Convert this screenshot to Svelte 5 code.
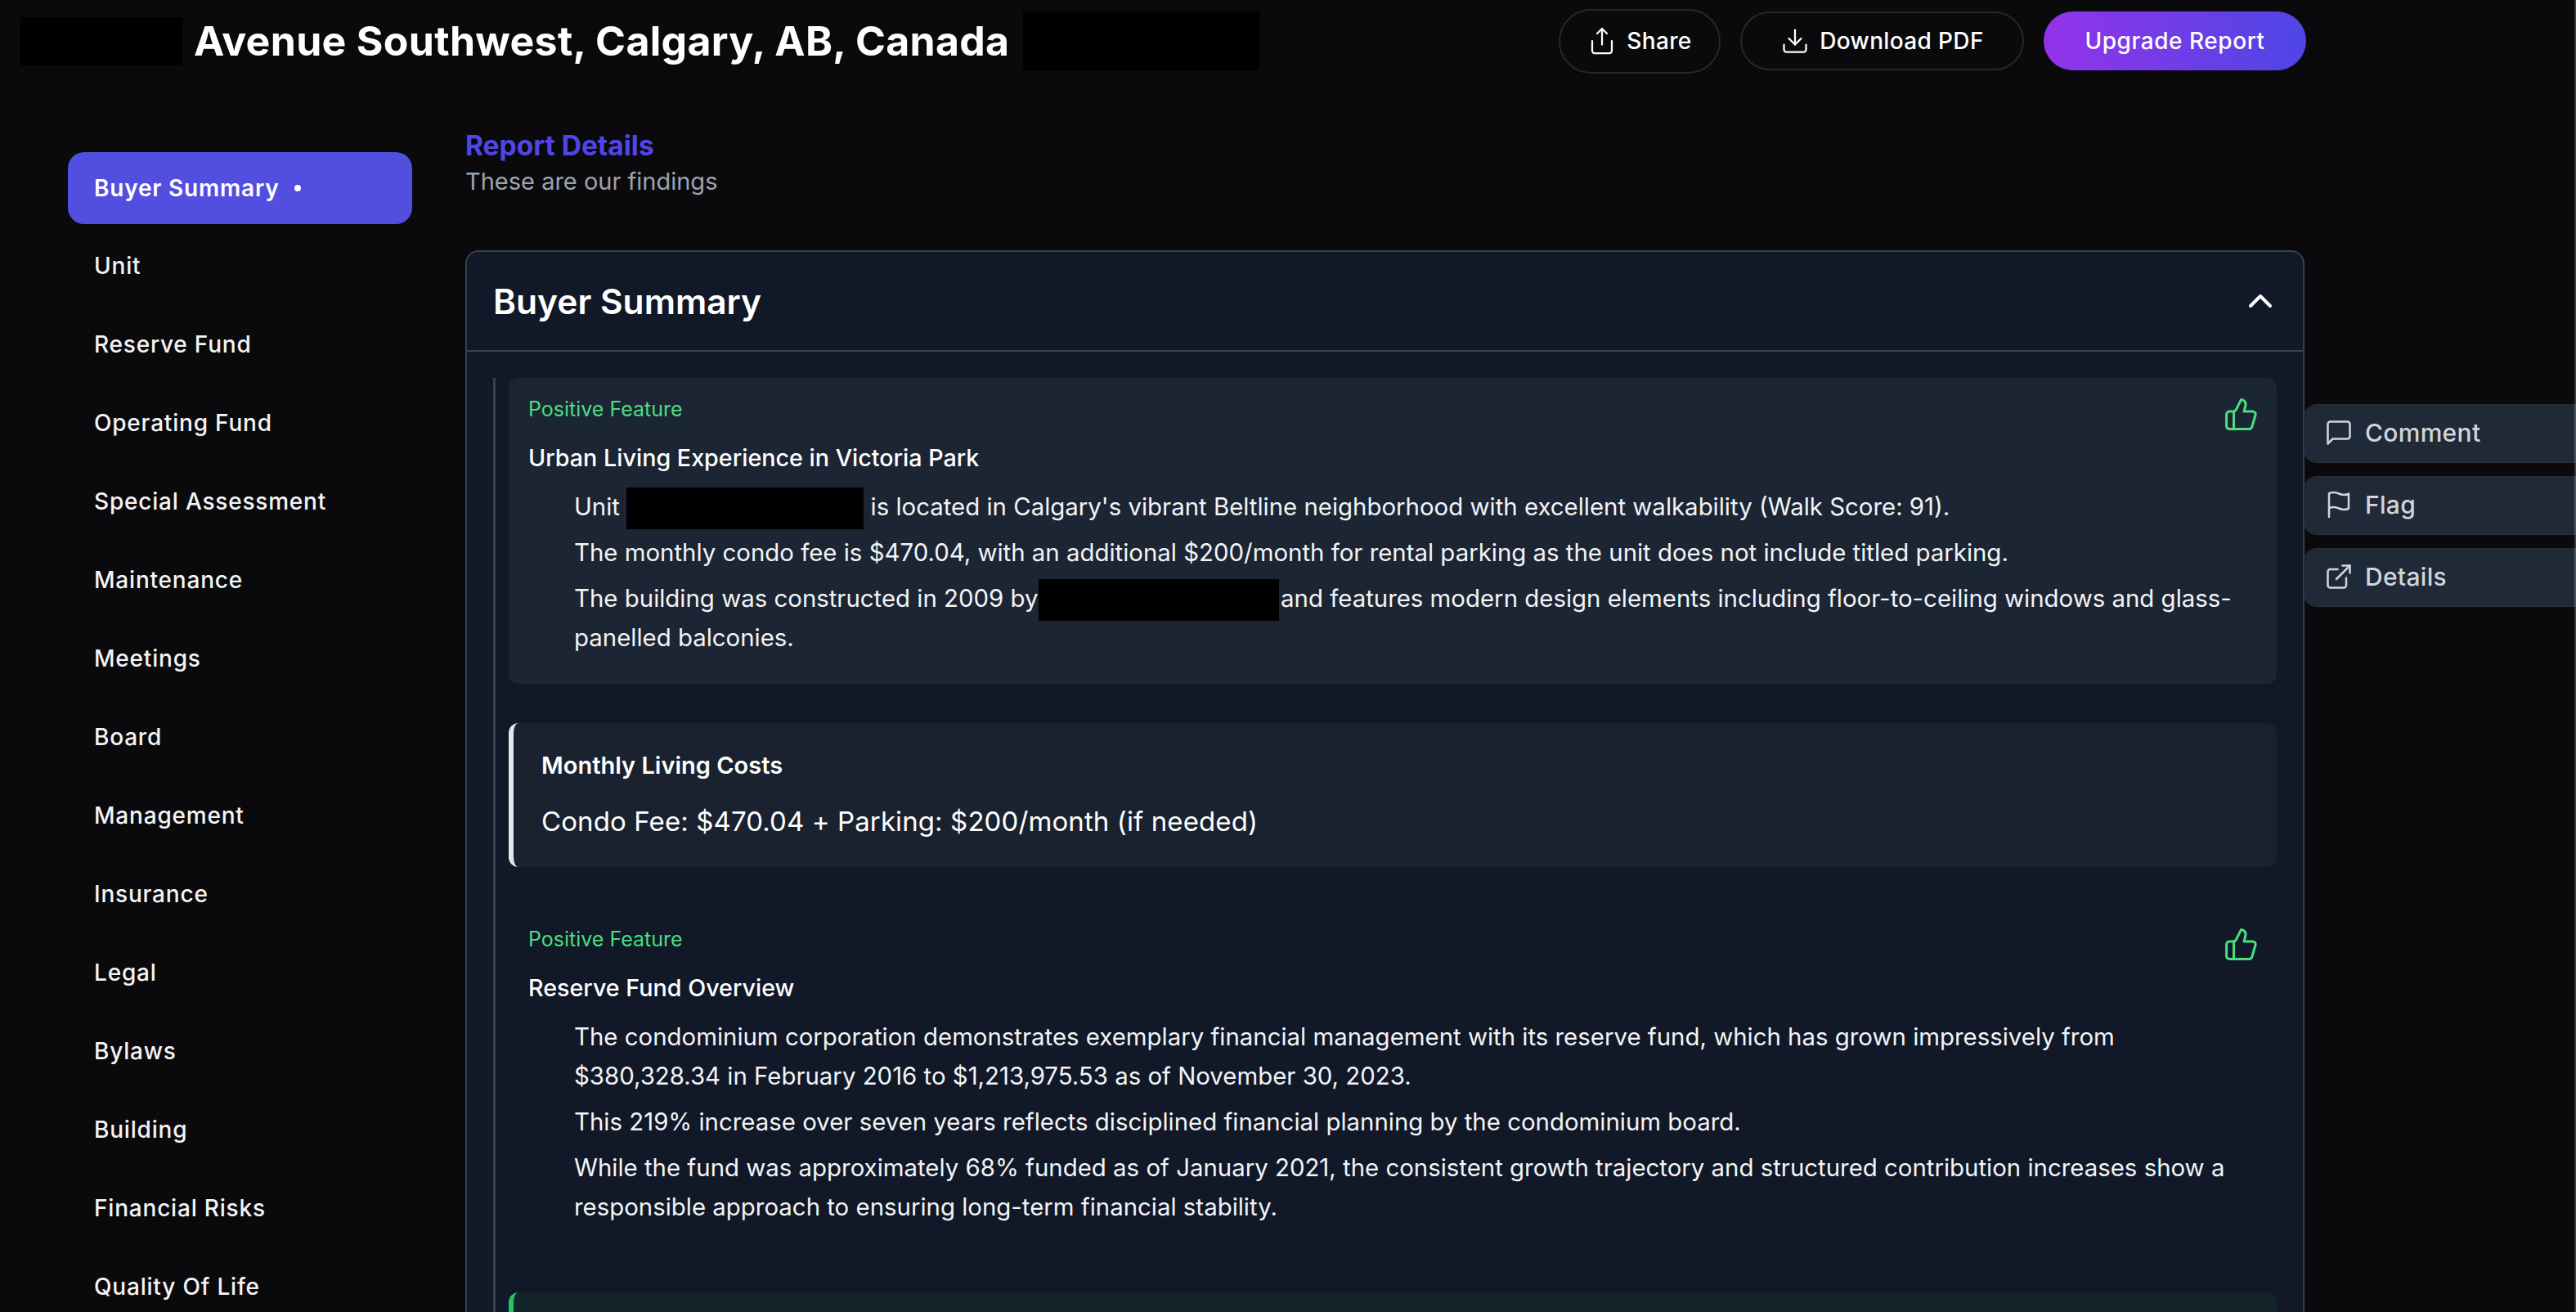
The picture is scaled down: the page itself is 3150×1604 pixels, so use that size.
<script lang="ts">
	const navItems = [
		'Unit',
		'Reserve Fund',
		'Operating Fund',
		'Special Assessment',
		'Maintenance',
		'Meetings',
		'Board',
		'Management',
		'Insurance',
		'Legal',
		'Bylaws',
		'Building',
		'Financial Risks',
		'Quality Of Life'
	];
</script>

{#snippet thumb()}
	<svg class="thumb" viewBox="0 0 24 24">
		<path d="M7 10v12" />
		<path d="M15 5.88 14 10h5.83a2 2 0 0 1 1.92 2.56l-2.33 8A2 2 0 0 1 17.5 22H4a2 2 0 0 1-2-2v-8a2 2 0 0 1 2-2h2.76a2 2 0 0 0 1.79-1.11L12 2a3.13 3.13 0 0 1 3 3.88Z" />
	</svg>
{/snippet}

<div class="page">
	<header>
		<div class="title">
			<span class="redact left"></span>
			<h1>Avenue Southwest, Calgary, AB, Canada</h1>
			<span class="redact right"></span>
		</div>
		<div class="actions">
			<button class="btn share">
				<svg class="btn-icon" viewBox="0 0 24 24">
					<path d="M4 12v8a2 2 0 0 0 2 2h12a2 2 0 0 0 2-2v-8" />
					<path d="M16 6l-4-4-4 4" />
					<path d="M12 2v13" />
				</svg>
				Share
			</button>
			<button class="btn download">
				<svg class="btn-icon" viewBox="0 0 24 24">
					<path d="M21 15v4a2 2 0 0 1-2 2H5a2 2 0 0 1-2-2v-4" />
					<path d="M7 10l5 5 5-5" />
					<path d="M12 15V3" />
				</svg>
				Download PDF
			</button>
			<button class="btn upgrade">Upgrade Report</button>
		</div>
	</header>

	<div class="layout">
		<nav>
			<a class="nav-item active" href="#buyer">Buyer Summary <span class="dot"></span></a>
			{#each navItems as item}
				<a class="nav-item" href="#section">{item}</a>
			{/each}
		</nav>

		<main>
			<h2>Report Details</h2>
			<p class="sub">These are our findings</p>

			<section class="card">
				<div class="card-head">
					<h3>Buyer Summary</h3>
					<svg class="chevron" viewBox="0 0 24 24"><path d="M6 15l6-6 6 6" /></svg>
				</div>
				<div class="card-body">
					<div class="thread">
						<article class="feature filled">
							<div class="feature-top">
								<span class="tag">Positive Feature</span>
								{@render thumb()}
							</div>
							<h4>Urban Living Experience in Victoria Park</h4>
							<ul>
								<li>Unit <span class="redact inline unit"></span> is located in Calgary's vibrant Beltline neighborhood with excellent walkability (Walk Score: 91).</li>
								<li>The monthly condo fee is $470.04, with an additional $200/month for rental parking as the unit does not include titled parking.</li>
								<li>The building was constructed in 2009 by <span class="redact inline builder"></span> and features modern design elements including floor-to-ceiling windows and glass-<br />panelled balconies.</li>
							</ul>
						</article>

						<aside class="callout">
							<h5>Monthly Living Costs</h5>
							<p>Condo Fee: $470.04 + Parking: $200/month (if needed)</p>
						</aside>

						<article class="feature">
							<div class="feature-top">
								<span class="tag">Positive Feature</span>
								{@render thumb()}
							</div>
							<h4>Reserve Fund Overview</h4>
							<ul>
								<li>The condominium corporation demonstrates exemplary financial management with its reserve fund, which has grown impressively from<br />$380,328.34 in February 2016 to $1,213,975.53 as of November 30, 2023.</li>
								<li>This 219% increase over seven years reflects disciplined financial planning by the condominium board.</li>
								<li>While the fund was approximately 68% funded as of January 2021, the consistent growth trajectory and structured contribution increases show a<br />responsible approach to ensuring long-term financial stability.</li>
							</ul>
						</article>

						<aside class="callout green"></aside>
					</div>
				</div>
			</section>
		</main>

		<div class="rail">
			<button class="rail-btn">
				<svg viewBox="0 0 24 24"><path d="M21 15a2 2 0 0 1-2 2H7l-4 4V5a2 2 0 0 1 2-2h14a2 2 0 0 1 2 2z" /></svg>
				Comment
			</button>
			<button class="rail-btn">
				<svg viewBox="0 0 24 24"><path d="M4 15s1-1 4-1 5 2 8 2 4-1 4-1V3s-1 1-4 1-5-2-8-2-4 1-4 1z" /><path d="M4 22v-7" /></svg>
				Flag
			</button>
			<button class="rail-btn">
				<svg viewBox="0 0 24 24"><path d="M18 13v6a2 2 0 0 1-2 2H5a2 2 0 0 1-2-2V8a2 2 0 0 1 2-2h6" /><path d="M15 3h6v6" /><path d="M10 14L21 3" /></svg>
				Details
			</button>
		</div>
	</div>

	<div class="scroll-edge"></div>
</div>

<style>
	:global(body) {
		margin: 0;
		background: #0a0a0c;
	}

	.page {
		position: relative;
		height: 1604px;
		overflow: hidden;
		color: #fff;
		font-family: Inter, 'Noto Sans', sans-serif;
		background: #0a0a0c;
	}

	.scroll-edge {
		position: absolute;
		top: 0;
		right: 0;
		bottom: 0;
		width: 2px;
		background: rgba(255, 255, 255, 0.2);
	}

	svg {
		fill: none;
		stroke: currentColor;
		stroke-width: 2;
		stroke-linecap: round;
		stroke-linejoin: round;
		flex: none;
	}

	header {
		display: flex;
		align-items: center;
		height: 100px;
		padding: 0 330px 0 25px;
	}

	.title {
		display: flex;
		align-items: center;
		flex: 1;
	}

	h1 {
		margin: 0;
		font-size: 50px;
		font-weight: 700;
		white-space: nowrap;
		letter-spacing: 0.3px;
	}

	.redact {
		display: block;
		background: #000;
	}

	.redact.left {
		width: 198px;
		height: 59px;
		margin-right: 14px;
	}

	.redact.right {
		width: 289px;
		height: 72px;
		margin-left: 17px;
	}

	.redact.inline {
		display: inline-block;
		height: 51px;
		margin: -6px 0;
		vertical-align: middle;
	}

	.redact.unit {
		width: 290px;
	}

	.redact.builder {
		width: 294px;
		margin-left: -8px;
		margin-right: -6px;
	}

	.actions {
		display: flex;
		align-items: center;
		gap: 24px;
	}

	.btn {
		display: flex;
		align-items: center;
		justify-content: center;
		gap: 12px;
		height: 72px;
		border: 2px solid #27272a;
		border-radius: 40px;
		background: none;
		color: #fff;
		font: 500 28px Inter, sans-serif;
		letter-spacing: 0.35px;
		white-space: nowrap;
	}

	.btn-icon {
		width: 36px;
		height: 36px;
		stroke-width: 1.5;
	}

	.share {
		width: 198px;
		height: 79px;
	}

	.download {
		width: 347px;
	}

	.upgrade {
		width: 321px;
		border: none;
		background: linear-gradient(90deg, #9333ea, #4f46e5);
		letter-spacing: 0.55px;
	}

	.layout {
		display: flex;
		padding-left: 83px;
	}

	nav {
		display: flex;
		flex-direction: column;
		gap: 8px;
		width: 421px;
		margin-top: 86px;
		margin-right: 65px;
		flex: none;
	}

	.nav-item {
		display: flex;
		align-items: center;
		gap: 18px;
		height: 88px;
		padding: 0 32px 3px;
		border-radius: 20px;
		color: #f4f4f5;
		font-size: 28px;
		font-weight: 500;
		letter-spacing: 0.8px;
		text-decoration: none;
		box-sizing: border-box;
	}

	.nav-item.active {
		padding-bottom: 0;
		background: #524fe0;
		color: #fff;
		font-weight: 600;
	}

	.dot {
		width: 8px;
		height: 8px;
		border-radius: 50%;
		background: #fff;
	}

	main {
		width: 2249px;
		flex: none;
	}

	h2 {
		margin: 58px 0 0;
		font-size: 33.5px;
		line-height: 40px;
		font-weight: 700;
		color: #4f46e5;
	}

	.sub {
		margin: 2px 0 0;
		font-size: 29px;
		line-height: 44px;
		color: #9ca3af;
	}

	.card {
		margin-top: 62px;
		border: 2px solid #374151;
		border-bottom: none;
		border-radius: 16px 16px 0 0;
		background: #111827;
	}

	.card-head {
		display: flex;
		align-items: center;
		justify-content: space-between;
		height: 120px;
		padding: 0 28px 0 32px;
		border-bottom: 2px solid #374151;
	}

	h3 {
		margin: 0;
		font-size: 42.5px;
		font-weight: 600;
	}

	.chevron {
		width: 48px;
		height: 48px;
	}

	.card-body {
		padding: 32px 32px 0;
	}

	.thread {
		border-left: 3px solid #374151;
		padding-left: 16px;
	}

	.feature {
		padding: 18px 24px 24px;
		border-radius: 12px;
	}

	.feature.filled {
		background: #1c2533;
	}

	.feature-top {
		display: flex;
		align-items: center;
		justify-content: space-between;
		height: 40px;
	}

	.tag {
		font-size: 25px;
		color: #4ade80;
	}

	.thumb {
		width: 43px;
		height: 43px;
		stroke: #4ade80;
		stroke-width: 1.7;
		margin: 12px -2px 0 0;
	}

	h4 {
		margin: 20px 0 0;
		font-size: 28.7px;
		line-height: 40px;
		font-weight: 500;
		color: #fff;
	}

	ul {
		margin: 16px 0 0;
		padding: 0 0 0 56px;
		list-style: none;
		color: #f3f4f6;
		font-size: 29.4px;
		line-height: 48px;
	}

	li {
		margin-bottom: 8px;
		white-space: nowrap;
	}

	.callout {
		display: flex;
		flex-direction: column;
		gap: 26px;
		height: 176px;
		box-sizing: border-box;
		margin: 48px 0 50px;
		padding: 32px 34px;
		border-left: 6px solid #e5e7eb;
		border-radius: 12px;
		background: #1a2230;
	}

	.callout.green {
		height: 60px;
		margin: 48px 0 0;
		border-left-color: #22c55e;
		background: #12232a;
	}

	h5 {
		margin: 0;
		font-size: 29px;
		line-height: 40px;
		font-weight: 600;
	}

	.callout p {
		margin: 0;
		font-size: 33px;
		letter-spacing: 0.1px;
		line-height: 44px;
	}

	.rail {
		display: flex;
		flex-direction: column;
		gap: 16px;
		flex: 1;
		margin-top: 394px;
		margin-left: -1px;
	}

	.rail-btn {
		display: flex;
		align-items: center;
		gap: 14px;
		height: 72px;
		padding: 0 24px 2px;
		border: 1px solid #2b2e36;
		border-right: none;
		border-radius: 16px 0 0 16px;
		background: #1f2937;
		color: #d1d5db;
		font: 500 30px Inter, sans-serif;
		letter-spacing: 0.3px;
	}

	.rail-btn svg {
		width: 36px;
		height: 36px;
		stroke-width: 1.7;
	}
</style>
